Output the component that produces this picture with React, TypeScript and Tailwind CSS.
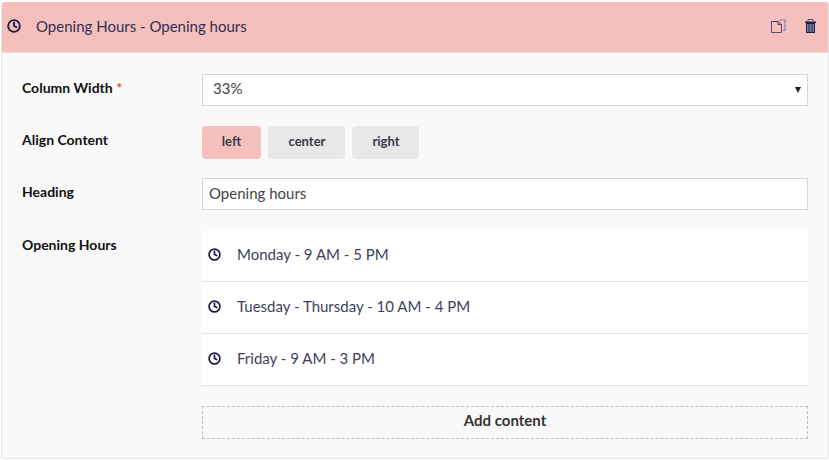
import { Clock } from "lucide-react";

const LATO = "font-['Lato',_'Noto_Sans',_sans-serif]";

const hours = ["Monday - 9 AM - 5 PM", "Tuesday - Thursday - 10 AM - 4 PM", "Friday - 9 AM - 3 PM"];

function CopyIcon() {
  return (
    <svg width="15" height="14" viewBox="0 0 15 14" fill="none" strokeWidth="1">
      <path d="M.5 2.500v11h10V5.500" stroke="#5d4b73" />
      <path d="M.5 2.500H7L10.500 5.500H7V2.500" stroke="#3f3d6b" />
      <path d="M8.500 1.500l3-1 1 .5h1.500v10.500h-2" stroke="#6c7aa3" />
    </svg>
  );
}

function TrashIcon() {
  return (
    <svg width="11" height="14" viewBox="0 0 11 14">
      <path d="M0 2.500h11V4H0z" fill="#1f1f4d" />
      <path d="M3 2.500V.5h5v2" fill="none" stroke="#5a4a66" strokeWidth="1" />
      <path d="M1 4h9v10H1z" fill="#1f1f4d" />
      <path d="M2 5h7v8H2z" fill="#6f7f9e" />
      <path d="M4 5v8M7 5v8" stroke="#2a2a55" strokeWidth="1" />
    </svg>
  );
}

function Row({ label, children, className }: { label: React.ReactNode; children: React.ReactNode; className?: string }) {
  return (
    <div className={`flex ${className ?? ""}`}>
      <div className="w-[180px] shrink-0 pt-[4px] text-[14px] font-bold leading-[20px] text-[#111]">{label}</div>
      <div className="w-[606px]">{children}</div>
    </div>
  );
}

export default function App() {
  return (
    <div className={`${LATO} h-[460px] w-[829px] overflow-hidden bg-white pl-px pt-[2px]`}>
      <div className="h-[457px] w-[828px] overflow-hidden rounded-[3px] border-x border-b border-[#e6e6e6] bg-[#f9f9f9]">
        <div className="flex h-[51px] items-center border-b border-[#eadcdb] bg-[#f5c0bc] pb-[2px] pl-[5px] pr-[12px] text-[#2f2f55]">
          <Clock size={14} strokeWidth={3.2} className="text-[#1d1d47]" />
          <span className="ml-[15px] text-[15px]">Opening Hours - Opening hours</span>
          <div className="ml-auto flex items-center gap-[19px]">
            <CopyIcon />
            <TrashIcon />
          </div>
        </div>

        <div className="pl-[20px] pt-[21px]">
          <Row label={<>Column Width <span className="text-[#d9534f]">*</span></>} className="h-[32px] items-start">
            <div className="relative h-[32px]">
              <select className="h-[32px] w-full appearance-none rounded-none border border-[#d6d6d6] bg-white pb-[4px] pl-[10px] text-[15px] text-[#444] outline-none">
                <option>33%</option>
              </select>
              <span className="absolute right-[7px] top-[13px] h-0 w-0 border-x-[3.5px] border-t-[6px] border-x-transparent border-t-[#222]" />
            </div>
          </Row>

          <Row label="Align Content" className="mt-[20px] items-start">
            <div className="flex gap-[7px] text-[13px] font-bold leading-[31px] text-[#3a3a4a]">
              <span className="h-[33px] w-[59px] rounded-[4px] bg-[#f5c0bc] text-center">left</span>
              <span className="h-[33px] w-[77px] rounded-[4px] bg-[#e8e8e8] pl-px text-center">center</span>
              <span className="h-[33px] w-[67px] rounded-[4px] bg-[#e8e8e8] pl-px text-center">right</span>
            </div>
          </Row>

          <Row label="Heading" className="mt-[19px] items-start">
            <input
              readOnly
              value="Opening hours"
              className="h-[32px] w-full border border-[#d6d6d6] bg-white px-[6px] pb-[2px] text-[15px] text-[#444] outline-none"
            />
          </Row>

          <Row label="Opening Hours" className="mt-[21px] items-start">
            <div className="bg-white">
              {hours.map((h) => (
                <div key={h} className="flex h-[52px] items-center border-b border-[#e4e4e4] pb-[2px] pl-[6px] text-[15px] text-[#3f3f5c] first:h-[51px] first:pb-[3px]">
                  <Clock size={13} strokeWidth={3.2} className="text-[#1d1d47]" />
                  <span className="ml-[16px]">{h}</span>
                </div>
              ))}
            </div>
            <div className="mt-[20px] flex h-[33px] items-center justify-center border border-dashed border-[#bdbdbd] pb-[5px] text-[15px] font-bold text-[#333]">
              Add content
            </div>
          </Row>
        </div>
      </div>
    </div>
  );
}
